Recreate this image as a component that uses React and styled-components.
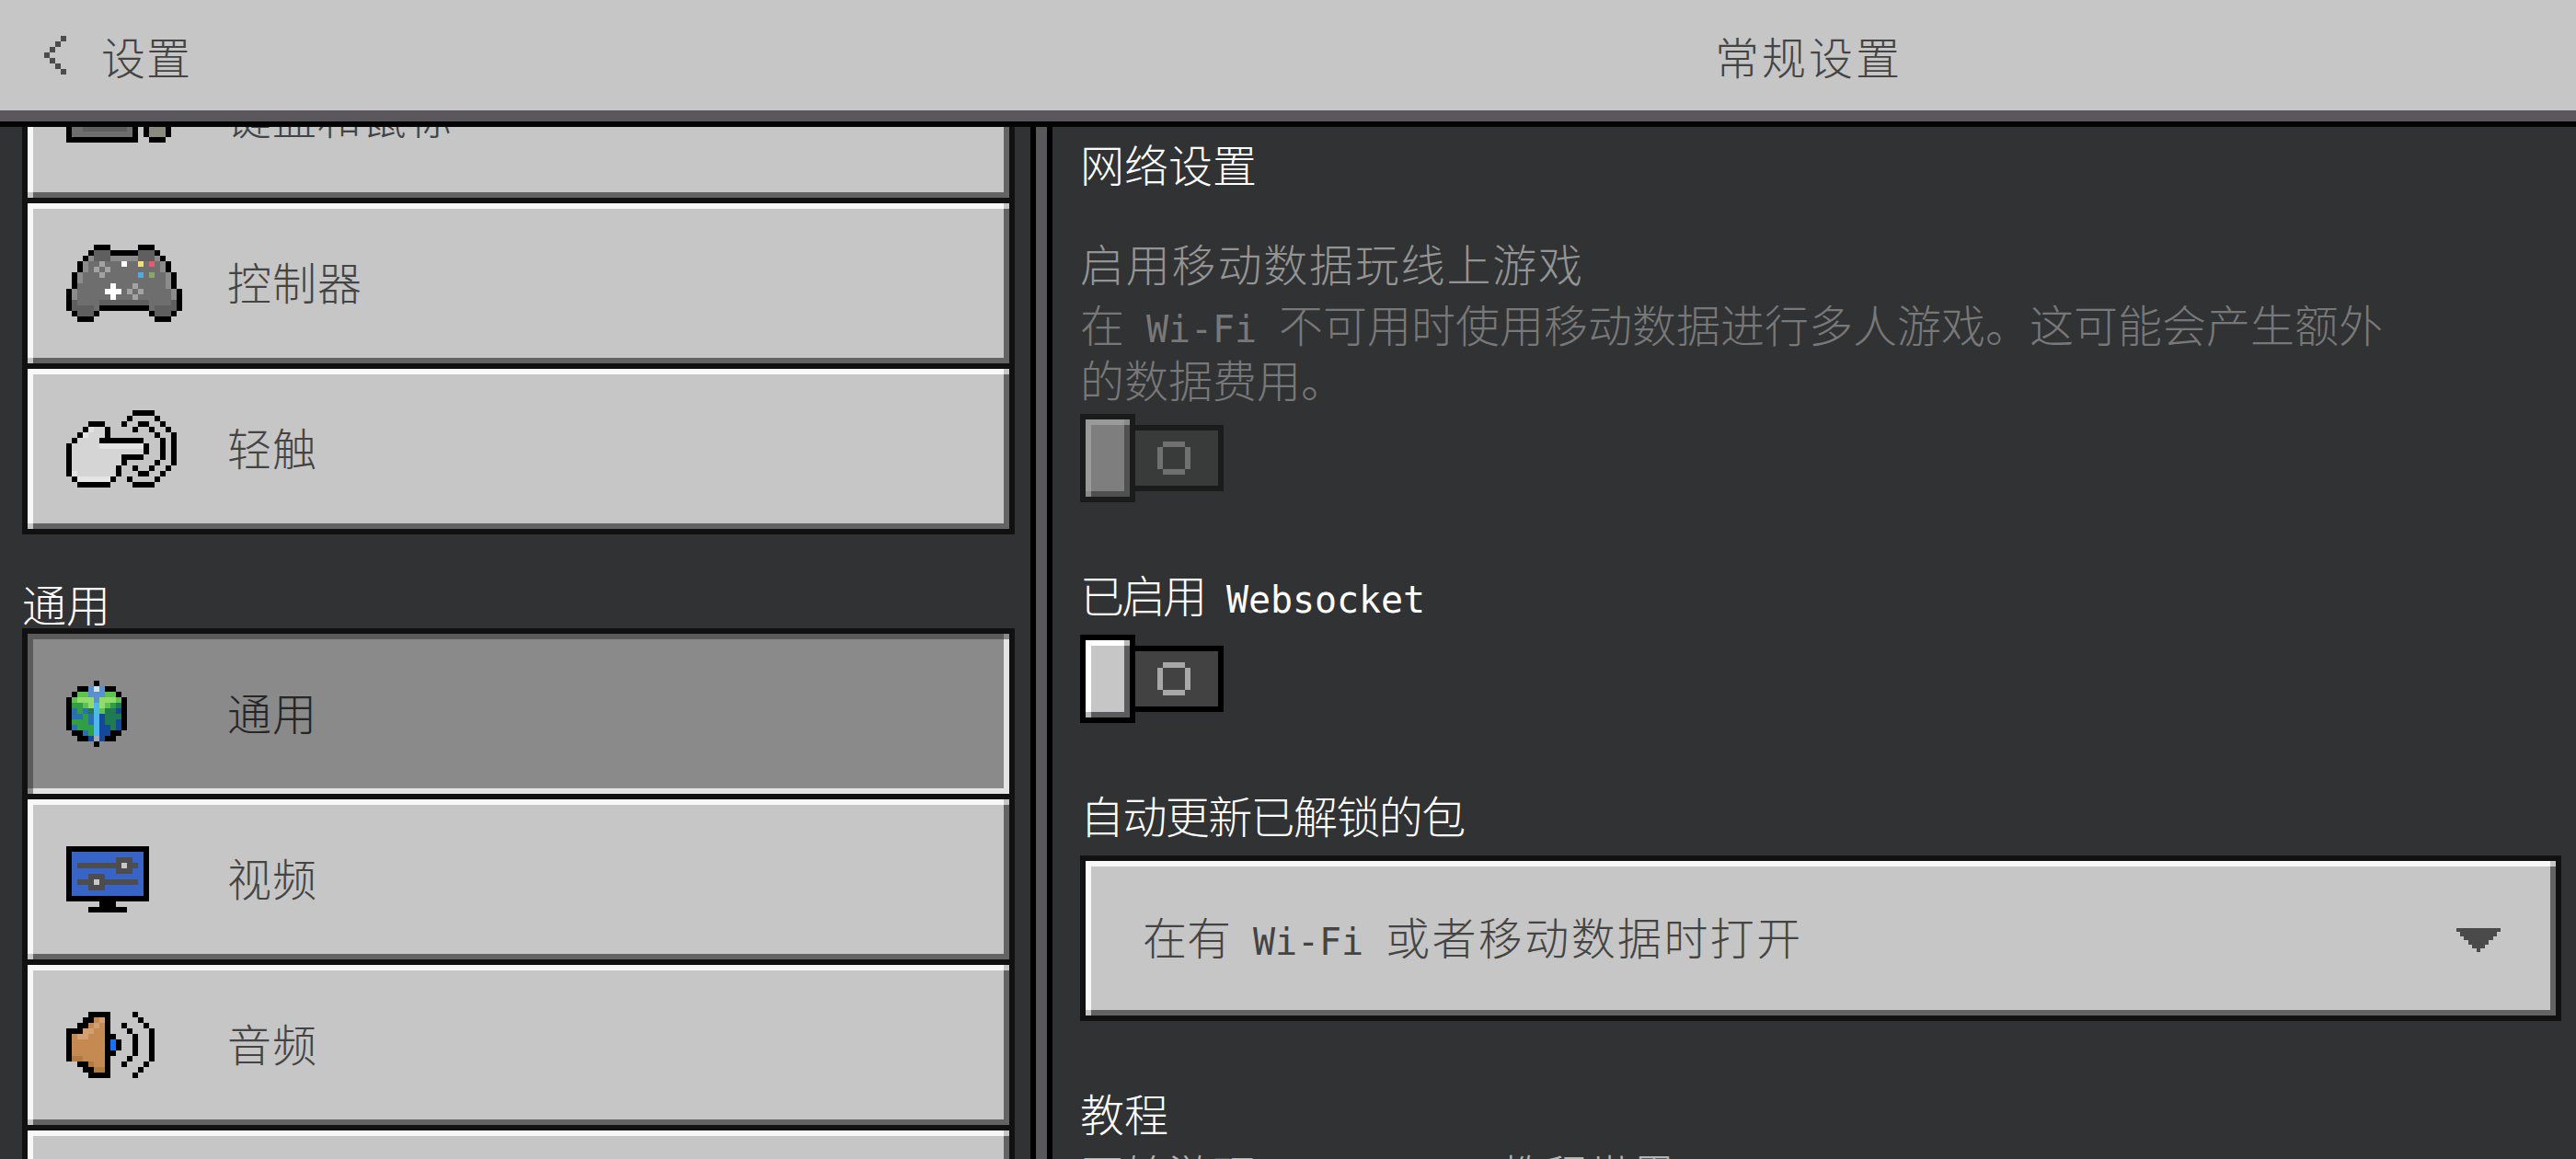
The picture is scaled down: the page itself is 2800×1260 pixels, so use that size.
import React from "react";
import styled, { createGlobalStyle } from "styled-components";

const GlobalStyle = createGlobalStyle`
    html, body {
        margin: 0;
        padding: 0;
        background: #313233;
        overflow: hidden;
    }
    body {
        font-family: "Noto Sans CJK SC", "Noto Sans", sans-serif;
        font-weight: 300;
    }
`;

// face with 6px bevel edges and the little corner squares of the game UI
const bevel = ({ hi, lo, corner, face }) => `
    background:
        linear-gradient(${corner}, ${corner}) left bottom / 6px 6px no-repeat,
        linear-gradient(${corner}, ${corner}) right top / 6px 6px no-repeat,
        linear-gradient(${hi}, ${hi}) left top / 100% 6px no-repeat,
        linear-gradient(${hi}, ${hi}) left top / 6px 100% no-repeat,
        linear-gradient(${lo}, ${lo}) left bottom / 100% 6px no-repeat,
        linear-gradient(${lo}, ${lo}) right top / 6px 100% no-repeat,
        ${face};
`;

const raised = { hi: "#f8f8f8", lo: "#636363", corner: "#c6c6c6", face: "#c6c6c6" };
const pressed = { hi: "#5b5b5b", lo: "#e3e3e3", corner: "#8a8a8a", face: "#8a8a8a" };

const Page = styled.div`
    width: 2800px;
    height: 1260px;
    overflow: hidden;
    display: flex;
    flex-direction: column;
    background: #313233;
`;

const TopBar = styled.header`
    flex: none;
    box-sizing: border-box;
    height: 138px;
    padding-bottom: 18px;
    display: flex;
    background: #c6c6c6;
    border-bottom: 6px solid #050505;
    box-shadow: inset 0 -12px 0 #5a585c;
    color: #444;
`;

const BackLink = styled.div`
    box-sizing: border-box;
    width: 1144px;
    padding: 6px 0 0 48px;
    display: flex;
    align-items: center;
    gap: 38px;
    font-size: 48px;
    line-height: 48px;
    letter-spacing: 1px;
`;

const Chevron = styled.span`
    display: flex;
`;

const PageTitle = styled.div`
    flex: 1;
    padding: 6px 12px 0 0;
    display: flex;
    align-items: center;
    justify-content: center;
    font-size: 48px;
    line-height: 48px;
    letter-spacing: 3px;
`;

const Body = styled.div`
    flex: 1;
    min-height: 0;
    display: flex;
`;

const Sidebar = styled.aside`
    flex: none;
    box-sizing: border-box;
    width: 1120px;
    padding: 0 17px 0 24px;
    overflow: hidden;
`;

const SideList = styled.div`
    margin-top: -103px;
`;

const SideHeading = styled.div`
    margin-top: 53px;
    height: 49px;
    font-size: 48px;
    line-height: 42px;
    color: #fff;
`;

const SideRow = styled.div`
    box-sizing: border-box;
    height: 186px;
    padding-left: 42px;
    display: flex;
    align-items: center;
    border: 6px solid #111;
    font-size: 48px;
    line-height: 42px;
    letter-spacing: 1px;
    color: ${(p) => (p.$active ? "#262626" : "#444")};
    ${(p) => bevel(p.$active ? pressed : raised)}

    & + & {
        margin-top: -6px;
    }
`;

const IconSlot = styled.span`
    flex: none;
    width: 175px;
    display: flex;
`;

const SideLabel = styled.span`
    padding-bottom: 6px;
`;

const Divider = styled.div`
    flex: none;
    box-sizing: border-box;
    width: 24px;
    background: #58585a;
    border-left: 6px solid #000;
    border-right: 6px solid #000;
`;

const Content = styled.main`
    flex: 1;
    min-width: 0;
    box-sizing: border-box;
    padding: 18px 16px 0 30px;
    overflow: hidden;
`;

const tones = { white: "#fff", muted: "#949494", bottom: "#b4b4b4" };

const Heading = styled.div`
    margin-top: ${(p) => p.$top || 0}px;
    padding-bottom: 6px;
    font-size: 48px;
    line-height: 42px;
    white-space: nowrap;
    letter-spacing: ${(p) => p.$spacing || 0}px;
    color: ${(p) => tones[p.$tone || "white"]};
`;

const Description = styled.div`
    margin-top: 9px;
    max-width: 1440px;
    font-size: 48px;
    line-height: 60px;
    color: #787878;
`;

const Latin = styled.span`
    font-family: "DejaVu Sans Mono", "Liberation Mono", monospace;
    font-size: 40px;
    line-height: 0;
    letter-spacing: -0.08px;
    white-space: pre;
`;

const ToggleRoot = styled.div`
    margin-top: ${(p) => p.$top}px;
    display: flex;
    align-items: center;
    width: 156px;
`;

const ToggleThumb = styled.span`
    flex: none;
    box-sizing: border-box;
    width: 60px;
    height: 96px;
    border: 6px solid ${(p) => (p.$disabled ? "#1a1b1b" : "#000")};
    ${(p) =>
        bevel(
            p.$disabled
                ? { hi: "#9a9a9a", lo: "#4f504f", corner: "#8a8a8a", face: "#7d7e7d" }
                : { hi: "#fff", lo: "#5b5a5c", corner: "#b8b8b8", face: "#c6c6c6" }
        )}
`;

const ToggleTrack = styled.span`
    flex: none;
    box-sizing: border-box;
    width: 96px;
    height: 72px;
    padding-right: 6px;
    display: flex;
    align-items: center;
    justify-content: center;
    background: ${(p) => (p.$disabled ? "#393b3a" : "#424242")};
    border: 6px solid ${(p) => (p.$disabled ? "#1a1b1b" : "#000")};
    border-left: 0;
`;

const Select = styled.div`
    margin-top: 18px;
    box-sizing: border-box;
    height: 180px;
    padding: 0 60px 0 62px;
    display: flex;
    align-items: center;
    justify-content: space-between;
    border: 6px solid #111;
    font-size: 48px;
    line-height: 42px;
    color: #444;
    ${bevel(raised)}
`;

const SelectText = styled.span`
    padding-bottom: 6px;
`;

const Wider = styled.span`
    letter-spacing: 2.4px;
`;

const ArrowWrap = styled.span`
    display: flex;
    margin-top: 4px;
`;

const PixelSvg = styled.svg`
    display: block;
    shape-rendering: crispEdges;
`;

// draws a pixel map, one rect for each run of the same letter
const Pixels = ({ map, colors, size = 6 }) => {
    const rects = [];
    map.forEach((row, y) => {
        let x = 0;
        while (x < row.length) {
            let end = x;
            while (end < row.length && row[end] === row[x]) end++;
            if (colors[row[x]]) {
                rects.push(
                    <rect key={`${x}-${y}`} x={x} y={y} width={end - x} height={1} fill={colors[row[x]]} />
                );
            }
            x = end;
        }
    });
    const w = map[0].length;
    const h = map.length;
    return (
        <PixelSvg width={w * size} height={h * size} viewBox={`0 0 ${w} ${h}`}>
            {rects}
        </PixelSvg>
    );
};

const chevronMap = ["...X", "..X.", ".X..", "X...", ".X..", "..X.", "...X"];

const keyboardMap = [
    "...................",
    "...........KKK.....",
    "KKKKKKKKKKKKK..K...",
    "KMMMMMMMMMMMK.KKKK.",
    "KMDMDMDMDMDMK.KSSSK",
    "KMMMMMMMMMMMK.KSSSK",
    "KMMDDDDDDDDMK.KSSSK",
    "KMMMMMMMMMMMK.KSSSK",
    "KKKKKKKKKKKKK..KKK.",
];

const controllerMap = [
    ".....KKK.....KKK.....",
    "....KDDDKKKKKDDDK....",
    "...KHDDDHHHHHDDDHK...",
    "..KHMMAMMMWMMYMRMHK..",
    "..KHMAMAMMMMMMMMMHK..",
    ".KHMMMAMMMMMMBMNMMHK.",
    ".KHMMMMMMMMMMMMMMMHK.",
    ".KMMMMMMWMMMAMMMMMHK.",
    "KHMMMMMWWWMAMAMMMMMHK",
    "KHMMMMMMWMMMAMMMMMMHK",
    "KDMMMMDDDDDDDDDMMMMDK",
    "KDDDDMKKKKKKKKKMDDDDK",
    ".KDDDK.........KDDDK.",
    "..KKK...........KKK..",
];

const handMap = [
    "............KKKK....",
    "...........K....K...",
    "....KKK...K..KK..K..",
    "...KHLLK....K..K..K.",
    "..KHLLLK........K..K",
    ".KLLLLKKKKKKKK...K.K",
    "KLLLLLHHHHHHHHK..K.K",
    "KLLLLLLLLLLLLLK..K.K",
    "KLLLLLLLLLKKKK...K.K",
    "KLLLLLLLLLK.....K..K",
    "KLLLLLLLLK..K..K..K.",
    "KHLLLLLLLK...KK..K..",
    ".KHHHHHHK..K....K...",
    "..KKKKKK....KKKK....",
];

const globeMap = [
    ".....K.....",
    "..KKswsKK..",
    ".KggsssggK.",
    "KgLLLsLLLgK",
    "KGGgLcLgGtK",
    "KbGbtcgttdK",
    "KbbGbcdtttK",
    "KGGGbcdttdK",
    "KbGGGcddtdK",
    ".KKbGcddKK.",
    "..KKdhdKK..",
    ".....K.....",
];

const monitorMap = [
    "KKKKKKKKKKKKKKK",
    "KBBBBBBBBBBBBBK",
    "KBBBBBBBBGGGBBK",
    "KBGGGGGGGGLGGBK",
    "KBBBBBBBBGGGBBK",
    "KBBBGGGBBBBBBBK",
    "KBGGGLGGGGGGGBK",
    "KBBBGGGBBBBBBBK",
    "KBBBBBBBBBBBBBK",
    "KKKKKKKKKKKKKKK",
    "......KKK......",
    "....KKKKKKK....",
];

const speakerMap = [
    "....KKKK....K...",
    "...KKTUK.....K..",
    "..KKTUTK..K...K.",
    "KKKUUTTK...K...K",
    "KTUUTTTKK...K..K",
    "KTTTTTTKBK..K..K",
    "KTTTTTTKBK..K..K",
    "KTTTTTTKK...K..K",
    "KVVTTTTK...K...K",
    "..KKVTTK..K...K.",
    "...KKVVK.....K..",
    "....KKKK....K...",
];

const ringMap = [".XXXX.", "X....X", "X....X", "X....X", "X....X", ".XXXX."];

const arrowRows = [
    [0, 48, 4],
    [4, 40, 5],
    [9, 32, 4],
    [13, 22, 5],
    [18, 14, 4],
    [22, 4, 4],
];

const Arrow = () => (
    <PixelSvg width="48" height="26" viewBox="0 0 48 26">
        {arrowRows.map(([y, w, h]) => (
            <rect key={y} x={(48 - w) / 2} y={y} width={w} height={h} fill="#4a4a4a" />
        ))}
    </PixelSvg>
);

const iconColors = {
    K: "#000",
    M: "#6e6e6e",
    H: "#8c8c8c",
    D: "#5f5f5f",
    A: "#a3a3a3",
    W: "#fff",
    Y: "#f0e070",
    R: "#e85a70",
    B: "#4eaae0",
    N: "#88a868",
    S: "#8b8b80",
};

const handColors = { K: "#000", L: "#d5d5d5", H: "#e4e4e4" };

const globeColors = {
    K: "#000",
    s: "#5a90d0",
    w: "#cfe2e6",
    g: "#5fc14e",
    L: "#8fdc6a",
    G: "#2f9e44",
    t: "#1f7a50",
    b: "#2a6fb0",
    c: "#4db8ee",
    d: "#14489a",
    h: "#a8a8a8",
};

const monitorColors = { K: "#000", B: "#3864c8", G: "#4d4d4d", L: "#c8c8c8" };

const speakerColors = { K: "#000", T: "#c48a52", U: "#d4a070", V: "#b07a45", B: "#1a70f0" };

const sideTop = [
    { label: "键盘和鼠标", map: keyboardMap, colors: iconColors },
    { label: "控制器", map: controllerMap, colors: iconColors },
    { label: "轻触", map: handMap, colors: handColors },
];

const sideBottom = [
    { label: "通用", map: globeMap, colors: globeColors, active: true },
    { label: "视频", map: monitorMap, colors: monitorColors },
    { label: "音频", map: speakerMap, colors: speakerColors },
    { label: "", map: null },
];

const SideItem = ({ label, map, colors, active }) => (
    <SideRow $active={active}>
        <IconSlot>{map && <Pixels map={map} colors={colors} />}</IconSlot>
        <SideLabel>{label}</SideLabel>
    </SideRow>
);

const Toggle = ({ top, disabled }) => (
    <ToggleRoot $top={top}>
        <ToggleThumb $disabled={disabled} />
        <ToggleTrack $disabled={disabled}>
            <Pixels map={ringMap} colors={{ X: disabled ? "#707070" : "#a8a8a8" }} />
        </ToggleTrack>
    </ToggleRoot>
);

export default function App() {
    return (
        <Page>
            <GlobalStyle />
            <TopBar>
                <BackLink>
                    <Chevron>
                        <Pixels map={chevronMap} colors={{ X: "#4c4c4c" }} />
                    </Chevron>
                    设置
                </BackLink>
                <PageTitle>常规设置</PageTitle>
            </TopBar>
            <Body>
                <Sidebar>
                    <SideList>
                        {sideTop.map((item) => (
                            <SideItem key={item.label} {...item} />
                        ))}
                        <SideHeading>通用</SideHeading>
                        {sideBottom.map((item) => (
                            <SideItem key={item.label} {...item} />
                        ))}
                    </SideList>
                </Sidebar>
                <Divider />
                <Content>
                    <Heading>网络设置</Heading>
                    <Heading $top={60} $tone="muted" $spacing={1.8}>
                        启用移动数据玩线上游戏
                    </Heading>
                    <Description>
                        在<Latin> Wi-Fi </Latin>不可用时使用移动数据进行多人游戏。这可能会产生额外的数据费用。
                    </Description>
                    <Toggle top={9} disabled />
                    <Heading $top={78} $spacing={-3}>
                        已启用<Latin> Websocket</Latin>
                    </Heading>
                    <Toggle top={18} />
                    <Heading $top={78} $spacing={-1.6}>
                        自动更新已解锁的包
                    </Heading>
                    <Select>
                        <SelectText>
                            在有<Latin> Wi-Fi </Latin>
                            <Wider>或者移动数据时打开</Wider>
                        </SelectText>
                        <ArrowWrap>
                            <Arrow />
                        </ArrowWrap>
                    </Select>
                    <Heading $top={78}>教程</Heading>
                    <Heading $top={18} $tone="bottom">
                        开始游玩<Latin> Minecraft </Latin>教程世界
                    </Heading>
                </Content>
            </Body>
        </Page>
    );
}
